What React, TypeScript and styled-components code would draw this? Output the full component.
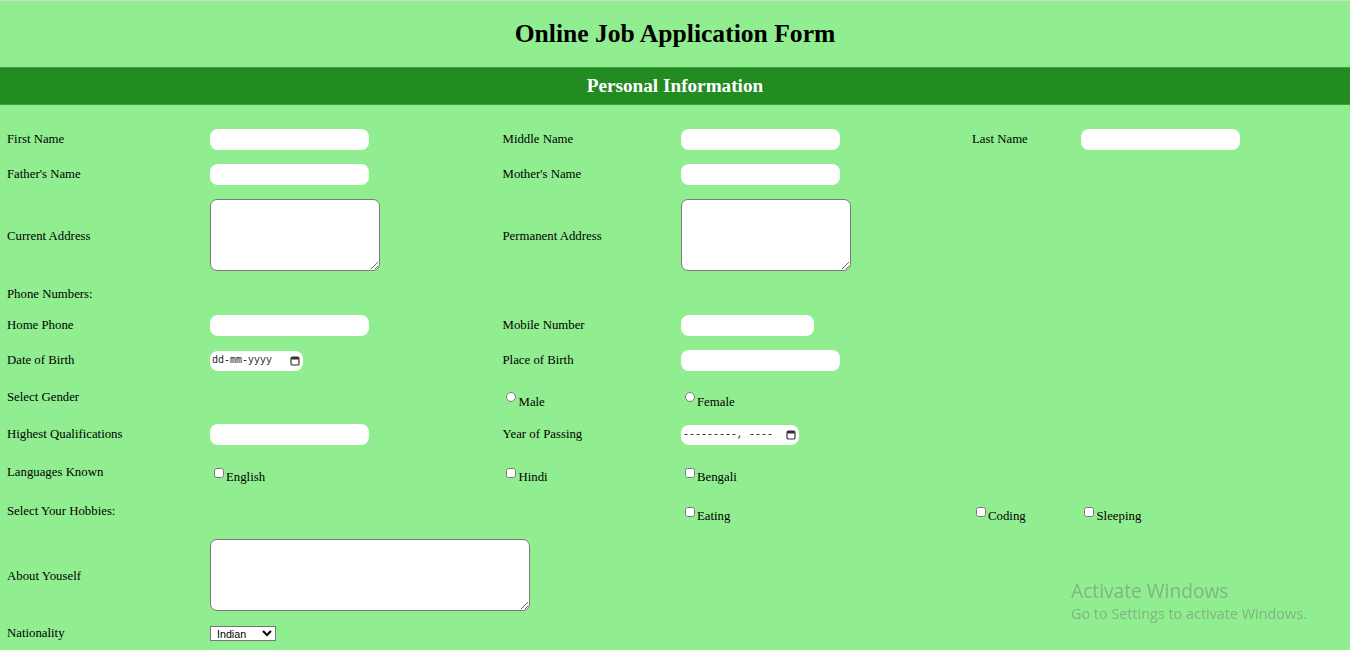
import styled, { createGlobalStyle } from "styled-components"

const GlobalStyle = createGlobalStyle`
    body {
        margin: 0;
        background-color: #90EE90;
        font-family: "Liberation Serif", "Times New Roman", serif;
        color: #000;
    }
`
const Page = styled.div`
    border-top: 1px solid #d6d6d6;
    padding-bottom: 20px;
`
const Title = styled.h1`
    margin: 0;
    height: 66px;
    display: flex;
    align-items: center;
    justify-content: center;
    font-size: 25.6px;
    font-weight: bold;
`
const SectionBar = styled.h2`
    margin: 0;
    height: 38px;
    box-sizing: border-box;
    border-top: 1px solid #3f9f3f;
    border-bottom: 1px solid #3f9f3f;
    background-color: #228B22;
    color: white;
    font-size: 19.2px;
    font-weight: bold;
    display: flex;
    align-items: center;
    justify-content: center;
`
const Form = styled.form`
    padding-top: 17px;
    padding-left: 7px;
`
const Row = styled.div<{ $h: number }>`
    display: grid;
    grid-template-columns: 203px 292.5px 178.5px 291px 108.5px 1fr;
    align-items: center;
    height: ${p => p.$h}px;
`
const Label = styled.span`
    font-size: 12.8px;
    line-height: 15px;
`
const Cell = styled.div`
    display: flex;
    align-items: center;
`
const TextInput = styled.input<{ $w?: number }>`
    width: ${p => p.$w || 159}px;
    height: 21px;
    box-sizing: border-box;
    border: none;
    border-radius: 8px;
    background: white;
    padding: 0 5px;
    outline: none;
`
const TextArea = styled.textarea<{ $w: number; $h: number }>`
    flex-shrink: 0;
    width: ${p => p.$w}px;
    height: ${p => p.$h}px;
    box-sizing: border-box;
    border: 1px solid #7a7a7a;
    border-radius: 7px;
    background: white;
    margin: 0 0 3px 0;
    outline: none;
`
const PickerBox = styled.div<{ $w: number }>`
    width: ${p => p.$w}px;
    height: 20px;
    box-sizing: border-box;
    background: white;
    border-radius: 8px;
    padding: 0 3px 0 2px;
    display: flex;
    align-items: center;
    justify-content: space-between;
    font-family: "Liberation Mono", "Courier New", monospace;
    font-size: 10px;
    color: #1a1a1a;
`
const Option = styled.label`
    display: flex;
    align-items: flex-start;
    font-size: 12.8px;
    line-height: 15px;
    input {
        width: 10px;
        height: 10px;
        margin: 7.5px 2.5px 0 3.5px;
    }
    span {
        padding-top: 10px;
    }
`
const Select = styled.select`
    width: 66px;
    height: 15px;
    padding: 0 0 0 2px;
    border: 1px solid #767676;
    border-radius: 0;
    background: white;
    font-family: "Liberation Sans", Arial, sans-serif;
    font-size: 10.7px;
    color: #000;
`
const Watermark = styled.div`
    position: fixed;
    left: 1071px;
    top: 578px;
    font-family: "Open Sans", "Noto Sans", sans-serif;
    color: rgba(120, 130, 120, 0.55);
    pointer-events: none;
`
const WatermarkTitle = styled.div`
    font-size: 19.2px;
    line-height: 26px;
`
const WatermarkText = styled.div`
    font-size: 14.4px;
    line-height: 20px;
`

function CalendarIcon() {
    return (
        <svg width="10" height="10" viewBox="0 0 10 10">
            <rect x="1" y="1" width="8" height="8" rx="1.6" fill="none" stroke="#333" strokeWidth="1.2" />
            <rect x="1" y="1" width="8" height="2.6" rx="1" fill="#333" />
        </svg>
    )
}

function Check({ text, type = "checkbox", name }: { text: string; type?: string; name?: string }) {
    return (
        <Option>
            <input type={type} name={name} />
            <span>{text}</span>
        </Option>
    )
}

function App() {
    return (
        <Page>
            <GlobalStyle />
            <Title>Online Job Application Form</Title>
            <SectionBar>Personal Information</SectionBar>
            <Form>
                <Row $h={35}>
                    <Label>First Name</Label>
                    <Cell><TextInput /></Cell>
                    <Label>Middle Name</Label>
                    <Cell><TextInput /></Cell>
                    <Label>Last Name</Label>
                    <Cell><TextInput /></Cell>
                </Row>
                <Row $h={35}>
                    <Label>Father's Name</Label>
                    <Cell><TextInput /></Cell>
                    <Label>Mother's Name</Label>
                    <Cell><TextInput /></Cell>
                </Row>
                <Row $h={88}>
                    <Label>Current Address</Label>
                    <Cell><TextArea $w={170} $h={72} /></Cell>
                    <Label>Permanent Address</Label>
                    <Cell><TextArea $w={170} $h={72} /></Cell>
                </Row>
                <Row $h={29}>
                    <Label>Phone Numbers:</Label>
                </Row>
                <Row $h={33}>
                    <Label>Home Phone</Label>
                    <Cell><TextInput /></Cell>
                    <Label>Mobile Number</Label>
                    <Cell><TextInput type="number" $w={133} /></Cell>
                </Row>
                <Row $h={37}>
                    <Label>Date of Birth</Label>
                    <Cell>
                        <PickerBox $w={93}>
                            <span>dd-mm-yyyy</span>
                            <CalendarIcon />
                        </PickerBox>
                    </Cell>
                    <Label>Place of Birth</Label>
                    <Cell><TextInput /></Cell>
                </Row>
                <Row $h={36}>
                    <Label>Select Gender</Label>
                    <span />
                    <Check type="radio" name="gender" text="Male" />
                    <Check type="radio" name="gender" text="Female" />
                </Row>
                <Row $h={39}>
                    <Label>Highest Qualifications</Label>
                    <Cell><TextInput /></Cell>
                    <Label>Year of Passing</Label>
                    <Cell>
                        <PickerBox $w={118}>
                            <span>---------, ----</span>
                            <CalendarIcon />
                        </PickerBox>
                    </Cell>
                </Row>
                <Row $h={37}>
                    <Label>Languages Known</Label>
                    <Check text="English" />
                    <Check text="Hindi" />
                    <Check text="Bengali" />
                </Row>
                <Row $h={41}>
                    <Label>Select Your Hobbies:</Label>
                    <span />
                    <span />
                    <Check text="Eating" />
                    <Check text="Coding" />
                    <Check text="Sleeping" />
                </Row>
                <Row $h={88}>
                    <Label>About Youself</Label>
                    <Cell><TextArea $w={320} $h={72} /></Cell>
                </Row>
                <Row $h={26}>
                    <Label>Nationality</Label>
                    <Cell>
                        <Select defaultValue="Indian">
                            <option>Indian</option>
                            <option>Other</option>
                        </Select>
                    </Cell>
                </Row>
            </Form>
            <Watermark>
                <WatermarkTitle>Activate Windows</WatermarkTitle>
                <WatermarkText>Go to Settings to activate Windows.</WatermarkText>
            </Watermark>
        </Page>
    )
}

export default App
